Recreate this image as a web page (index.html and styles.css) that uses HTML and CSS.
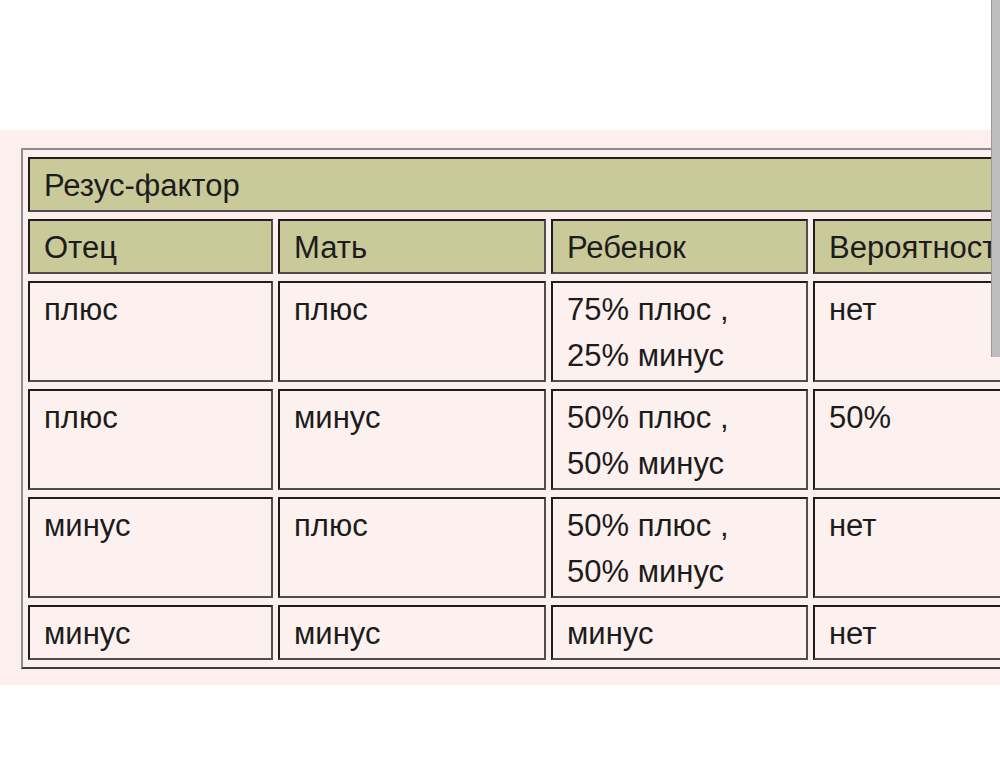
FILE: index.html
```html
<!DOCTYPE html>
<html lang="ru">
<head>
<meta charset="utf-8">
<title>Резус-фактор</title>
<link rel="stylesheet" href="styles.css">
</head>
<body>
<div class="page">
  <div class="top-space"></div>
  <div class="panel">
    <table class="rh">
      <colgroup>
        <col class="c1"><col class="c2"><col class="c3"><col class="c4">
      </colgroup>
      <tr class="title-row"><td class="head" colspan="4">Резус-фактор</td></tr>
      <tr class="col-row">
        <td class="head">Отец</td>
        <td class="head">Мать</td>
        <td class="head">Ребенок</td>
        <td class="head">Вероятность</td>
      </tr>
      <tr>
        <td>плюс</td>
        <td>плюс</td>
        <td>75% плюс ,<br>25% минус</td>
        <td>нет</td>
      </tr>
      <tr>
        <td>плюс</td>
        <td>минус</td>
        <td>50% плюс ,<br>50% минус</td>
        <td>50%</td>
      </tr>
      <tr>
        <td>минус</td>
        <td>плюс</td>
        <td>50% плюс ,<br>50% минус</td>
        <td>нет</td>
      </tr>
      <tr>
        <td>минус</td>
        <td>минус</td>
        <td>минус</td>
        <td>нет</td>
      </tr>
    </table>
  </div>
  <div class="scroll-thumb"></div>
</div>
</body>
</html>
```
FILE: styles.css
```css
html, body {
  margin: 0;
  padding: 0;
  background: #ffffff;
}
body {
  width: 1000px;
  height: 773px;
  overflow: hidden;
}
.page {
  position: relative;
  width: 1000px;
  height: 773px;
  overflow: hidden;
}
.top-space {
  height: 130px;
}
.panel {
  background: #fcefed;
  padding: 18px 0 16px 21px;
  overflow: hidden;
}
.rh {
  border-collapse: separate;
  border-spacing: 5px 7px;
  table-layout: fixed;
  width: 1059px;
  border-style: solid;
  border-width: 2px;
  border-color: #8c8c8c #3a3a3a #3a3a3a #8c8c8c;
  font-family: "Liberation Sans", Arial, sans-serif;
  font-size: 31px;
  color: #1c1c1c;
}
.c1 { width: 245px; }
.c2 { width: 268px; }
.c3 { width: 257px; }
.c4 { width: 260px; }
.rh td {
  box-sizing: border-box;
  vertical-align: top;
  line-height: 46px;
  padding: 4px 6px 1px 14px;
  border-style: solid;
  border-width: 2px;
  border-color: #1e1e1e #4e4e4e #4e4e4e #1e1e1e;
  background: #fdf1ef;
  white-space: nowrap;
  overflow: hidden;
}
.rh td.head {
  background: #c9c99a;
}
.scroll-thumb {
  position: absolute;
  top: 0;
  right: 0;
  width: 8px;
  height: 357px;
  background: #bdbdbd;
  border-left: 1px solid #9a9a9a;
}
```
